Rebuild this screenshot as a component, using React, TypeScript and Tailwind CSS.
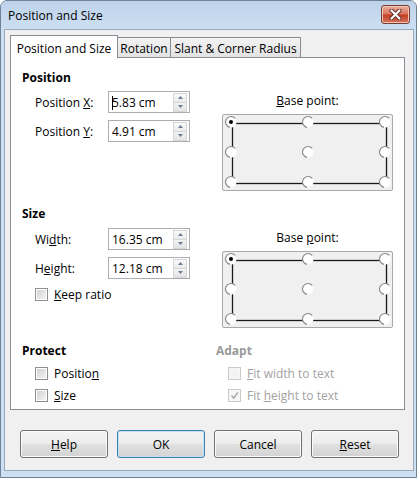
import React from 'react'

const FONT = "font-['Open_Sans','Noto_Sans',sans-serif]"

// tiny up/down spinner that sits inside the number fields
function Spin() {
  return (
    <div className="flex h-[19px] w-[14px] flex-col border border-[#d6d6d6]">
      <div className="flex flex-1 items-center justify-center border-b border-[#d6d6d6] bg-linear-to-b from-[#fafafa] to-[#ebebeb]">
        <svg width="5" height="3" className="block">
          <path d="M0 3 L2.5 0 L5 3Z" fill="#6b7a8f" />
        </svg>
      </div>
      <div className="flex flex-1 items-center justify-center bg-linear-to-b from-[#f3f3f3] to-[#e4e4e4]">
        <svg width="5" height="3" className="block">
          <path d="M0 0 L2.5 3 L5 0Z" fill="#6b7a8f" />
        </svg>
      </div>
    </div>
  )
}

function NumField({ value, caret }: { value: string; caret?: boolean }) {
  return (
    <div className="flex h-[22px] w-[82px] items-center border border-[#abadb3] bg-white pl-[3px] pr-[2px]">
      <span className="relative flex-1 pt-px text-[12px] leading-4 text-black">
        {caret && <span className="absolute left-0 top-[2px] h-[14px] w-px bg-black" />}
        {value}
      </span>
      <Spin />
    </div>
  )
}

function FieldRow({ label, value, caret, className }: { label: React.ReactNode; value: string; caret?: boolean; className: string }) {
  return (
    <div className={`flex items-center pl-[13px] ${className}`}>
      <span className="w-[73px] pt-px text-[12px] leading-4">{label}</span>
      <NumField value={value} caret={caret} />
    </div>
  )
}

function Radio({ x, y, on }: { x: number; y: number; on?: boolean }) {
  const r = 5.5
  const a = (deg: number) => [x + r * Math.cos((deg * Math.PI) / 180), y + r * Math.sin((deg * Math.PI) / 180)]
  const [sx, sy] = a(-40)
  const [ex, ey] = a(100)
  return (
    <g>
      <circle cx={x} cy={y} r={r} fill="#ffffff" />
      <path d={`M${sx} ${sy} A${r} ${r} 0 1 0 ${ex} ${ey}`} fill="none" stroke="#8a8a8a" strokeWidth="1.2" />
      {on && <circle cx={x} cy={y} r="2" fill="#000" />}
    </g>
  )
}

function BasePoint({ label, className }: { label: React.ReactNode; className: string }) {
  const xs = [8, 85, 162]
  const ys = [7, 37, 67]
  return (
    <div className={`flex w-[171px] flex-col items-center ${className}`}>
      <div className="h-4 pt-px text-[12px] leading-4">{label}</div>
      <div className="mt-[6px] h-[77px] w-[171px] rounded-[2px] border border-[#a9a9a9] bg-[#f0f0f0]">
        <svg width="169" height="75" className="block">
          <rect x="9.5" y="8.5" width="154" height="60" fill="none" stroke="#1a1a1a" strokeWidth="1.3" />
          {ys.map((y) =>
            xs.map((x) => <Radio key={`${x}-${y}`} x={x} y={y} on={x === 8 && y === 7} />)
          )}
        </svg>
      </div>
    </div>
  )
}

function Check({ checked, disabled }: { checked?: boolean; disabled?: boolean }) {
  return (
    <span
      className={`flex h-[13px] w-[13px] shrink-0 items-center justify-center border ${
        disabled ? 'border-[#cacaca] bg-[#f7f7f7]' : 'border-[#8e8f8f] bg-white'
      }`}
    >
      {checked ? (
        <svg width="9" height="9" className="block">
          <path d="M1.5 4.5 L3.8 7 L7.8 1.5" fill="none" stroke="#a9a9a9" strokeWidth="1.5" />
        </svg>
      ) : (
        <span
          className={`h-[9px] w-[9px] ${
            disabled ? 'bg-[#f3f3f3]' : 'bg-linear-to-br from-[#cfd2d6] to-[#f4f4f4]'
          }`}
        />
      )}
    </span>
  )
}

function CheckRow({ label, checked, disabled, className }: { label: React.ReactNode; checked?: boolean; disabled?: boolean; className: string }) {
  return (
    <div className={`flex h-4 items-center gap-[6px] ${className}`}>
      <Check checked={checked} disabled={disabled} />
      <span className={`pt-px text-[12px] leading-4 ${disabled ? 'text-[#a2a2a2]' : 'text-black'}`}>{label}</span>
    </div>
  )
}

function Btn({ children, primary }: { children: React.ReactNode; primary?: boolean }) {
  return (
    <div
      className={`flex h-[28px] w-[88px] items-center justify-center rounded-[3px] border bg-[linear-gradient(#f4f4f4,#ececec_48%,#e0e0e0_52%,#d3d3d3)] pt-px text-[12px] text-black ${
        primary
          ? 'border-[#3c7fb1] shadow-[inset_0_0_0_1px_#c3e2f7]'
          : 'border-[#707070] shadow-[inset_0_0_0_1px_#fbfbfb]'
      }`}
    >
      {children}
    </div>
  )
}

export default function App() {
  return (
    <div className={`${FONT} flex h-[478px] w-[417px] flex-col rounded-t-[7px] border border-[#6f8298] bg-[#cddff2] pb-[6px] pl-[3px] pr-[2px]`}>
      {/* title bar */}
      <div className="-ml-[3px] -mr-[2px] flex h-[28px] items-start rounded-t-[6px] bg-linear-to-b from-[#bdd2ea] to-[#cddff2]">
        <span className="mt-[7px] pl-[7px] text-[12px] leading-4 text-black">Position and Size</span>
        <div className="ml-auto mr-[6px] mt-[4px] flex h-[19px] w-[29px] items-center justify-center rounded-[3px] border border-[#7b3b2f] bg-[linear-gradient(#eab0a0,#d9765e_45%,#c43f25_55%,#d5765a)] shadow-[inset_0_0_0_1px_#f2c7bb]">
          <svg width="13" height="11" className="block">
            <path d="M2.5 1.5 L10.5 9.5 M10.5 1.5 L2.5 9.5" stroke="#5a2a22" strokeWidth="4" strokeLinecap="round" />
            <path d="M2.5 1.5 L10.5 9.5 M10.5 1.5 L2.5 9.5" stroke="#ffffff" strokeWidth="2.2" strokeLinecap="round" />
          </svg>
        </div>
      </div>

      {/* client area */}
      <div className="flex flex-1 flex-col border border-[#9aa9ba] bg-[#f0f0f0] pl-[5px] pt-[5px]">
        {/* tabs */}
        <div className="relative z-10 flex items-end">
          <div className="-mb-px flex h-[23px] w-[108px] items-start justify-center border border-b-0 border-[#898c95] bg-white pt-[5px] text-[12px] leading-4">
            Position and Size
          </div>
          <div className="-ml-px flex h-[20px] w-[54px] items-start justify-center border border-b-0 border-[#898c95] bg-linear-to-b from-[#f3f3f3] to-[#e3e3e3] pt-[3px] text-[12px] leading-4">
            Rotation
          </div>
          <div className="-ml-px flex h-[20px] w-[131px] items-start justify-center border border-b-0 border-[#898c95] bg-linear-to-b from-[#f3f3f3] to-[#e3e3e3] pt-[3px] text-[12px] leading-4">
            Slant &amp; Corner Radius
          </div>
        </div>

        {/* tab panel */}
        <div className="h-[353px] w-[395px] border border-[#898c95] bg-white px-[11px] pt-[11px] text-black">
          {/* Position */}
          <div className="flex">
            <div className="w-[201px]">
              <div className="h-4 pt-px text-[12px] font-bold leading-4">Position</div>
              <FieldRow className="mt-[6px]" label={<>Position <u>X</u>:</>} value="5.83 cm" caret />
              <FieldRow className="mt-[7px]" label={<>Position <u>Y</u>:</>} value="4.91 cm" />
            </div>
            <BasePoint className="mt-[23px]" label={<><u>B</u>ase point:</>} />
          </div>

          {/* Size */}
          <div className="mt-[14px] flex">
            <div className="w-[201px]">
              <div className="h-4 pt-px text-[12px] font-bold leading-4">Size</div>
              <FieldRow className="mt-[7px]" label={<>Wi<u>d</u>th:</>} value="16.35 cm" />
              <FieldRow className="mt-[7px]" label={<>H<u>e</u>ight:</>} value="12.18 cm" />
              <CheckRow className="mt-[7px] pl-[13px]" label={<><u>K</u>eep ratio</>} />
            </div>
            <BasePoint className="mt-[24px]" label={<>Base <u>p</u>oint:</>} />
          </div>

          {/* Protect / Adapt */}
          <div className="mt-[14px] flex">
            <div className="w-[194px]">
              <div className="h-4 pt-px text-[12px] font-bold leading-4">Protect</div>
              <CheckRow className="mt-[7px] pl-[13px]" label={<>Positio<u>n</u></>} />
              <CheckRow className="mt-[6px] pl-[13px]" label={<><u>S</u>ize</>} />
            </div>
            <div>
              <div className="h-4 pt-px text-[12px] font-bold leading-4 text-[#9a9a9a]">Adapt</div>
              <CheckRow className="mt-[7px] pl-[12px]" disabled label={<><u>F</u>it width to text</>} />
              <CheckRow className="mt-[6px] pl-[12px]" disabled checked label={<>Fit <u>h</u>eight to text</>} />
            </div>
          </div>
        </div>

        {/* buttons */}
        <div className="mt-[20px] flex gap-[9px] pl-[10px]">
          <Btn><u>H</u>elp</Btn>
          <Btn primary>OK</Btn>
          <Btn>Cancel</Btn>
          <Btn><u>R</u>eset</Btn>
        </div>
      </div>
    </div>
  )
}
